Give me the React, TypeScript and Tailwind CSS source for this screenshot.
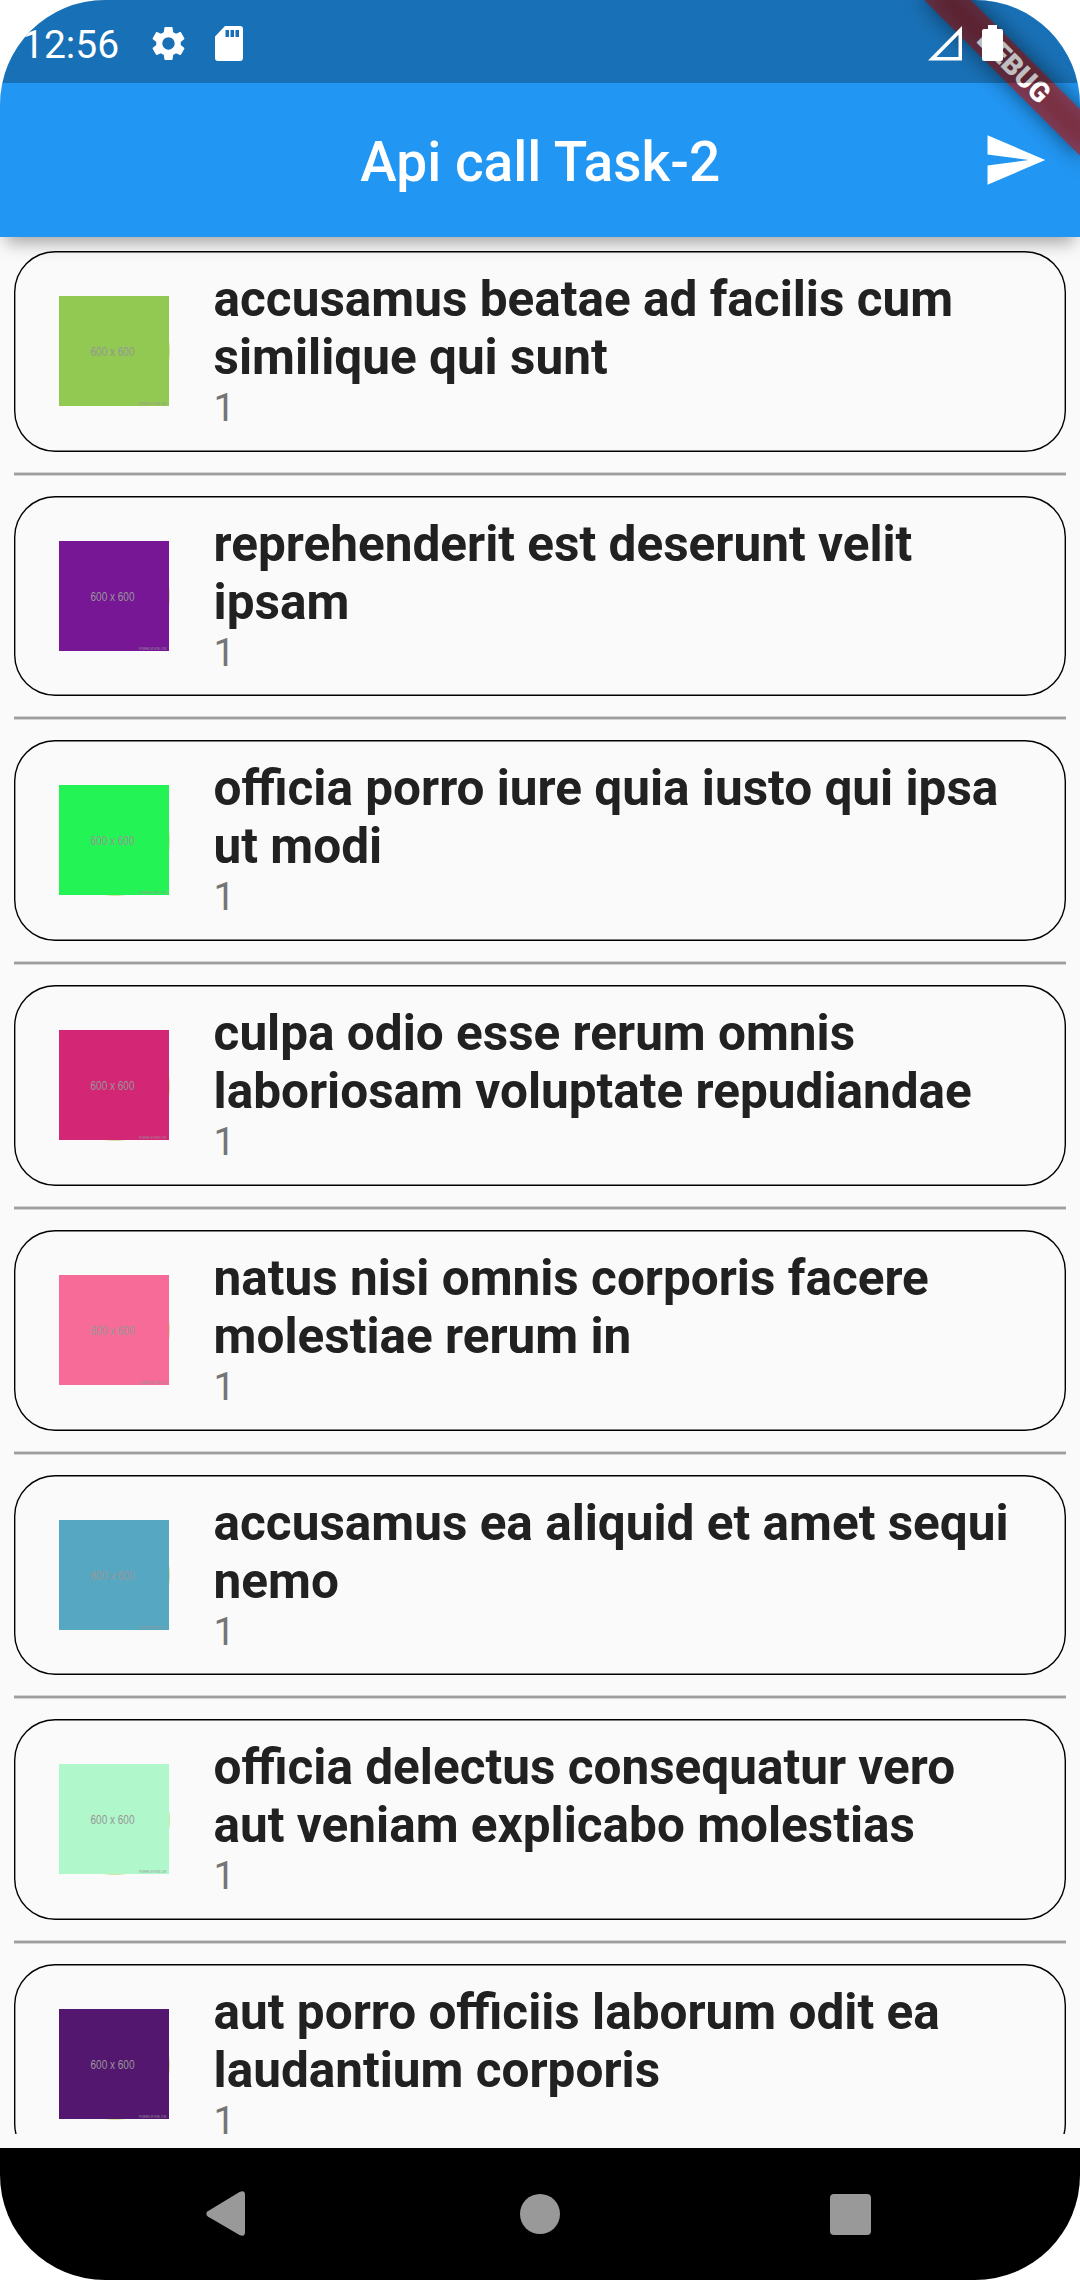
const albums = [
  { title: ["accusamus beatae ad facilis cum", "similique qui sunt"], color: "bg-[#92c952]", id: 1 },
  { title: ["reprehenderit est deserunt velit", "ipsam"], color: "bg-[#771796]", id: 1 },
  { title: ["officia porro iure quia iusto qui ipsa", "ut modi"], color: "bg-[#24f355]", id: 1 },
  { title: ["culpa odio esse rerum omnis", "laboriosam voluptate repudiandae"], color: "bg-[#d32776]", id: 1 },
  { title: ["natus nisi omnis corporis facere", "molestiae rerum in"], color: "bg-[#f66b97]", id: 1 },
  { title: ["accusamus ea aliquid et amet sequi", "nemo"], color: "bg-[#56a8c2]", id: 1 },
  { title: ["officia delectus consequatur vero", "aut veniam explicabo molestias"], color: "bg-[#b0f7cc]", id: 1 },
  { title: ["aut porro officiis laborum odit ea", "laudantium corporis"], color: "bg-[#54176f]", id: 1 },
];

function StatusBar() {
  return (
    <div className="absolute inset-x-0 top-0 z-20 flex h-[83px] items-center bg-black/25 text-white">
      <span className="ml-[22px] w-[97px] whitespace-nowrap pt-[6px] text-[39px] leading-[46px]">12:56</span>
      <svg className="ml-[29px] mt-[4px] size-[41px]" viewBox="0 0 24 24" fill="currentColor">
        <path d="M19.14 12.94c.04-.3.06-.61.06-.94 0-.32-.02-.64-.07-.94l2.03-1.58c.18-.14.23-.41.12-.61l-1.92-3.32c-.12-.22-.37-.29-.59-.22l-2.39.96c-.5-.38-1.03-.7-1.62-.94l-.36-2.54c-.04-.24-.24-.41-.48-.41h-3.84c-.24 0-.43.17-.47.41l-.36 2.54c-.59.24-1.13.57-1.62.94l-2.39-.96c-.22-.08-.47 0-.59.22L2.74 8.87c-.12.21-.08.47.12.61l2.03 1.58c-.05.3-.09.63-.09.94s.02.64.07.94l-2.03 1.58c-.18.14-.23.41-.12.61l1.92 3.32c.12.22.37.29.59.22l2.39-.96c.5.38 1.03.7 1.62.94l.36 2.54c.05.24.24.41.48.41h3.84c.24 0 .44-.17.47-.41l.36-2.54c.59-.24 1.13-.56 1.62-.94l2.39.96c.22.08.47 0 .59-.22l1.92-3.32c.12-.22.07-.47-.12-.61l-2.01-1.58zM12 15.6c-1.98 0-3.6-1.62-3.6-3.6s1.62-3.6 3.6-3.6 3.6 1.62 3.6 3.6-1.62 3.6-3.6 3.6z" />
      </svg>
      <svg className="ml-[26px] mt-[4px] h-[35px] w-[28px]" viewBox="0 0 28 35" fill="currentColor">
        <path fillRule="evenodd" d="M10 0H25a3 3 0 0 1 3 3V32a3 3 0 0 1-3 3H3a3 3 0 0 1-3-3V10.500ZM10.500 4v7h3.500V4ZM15.500 4v7h3.500V4ZM20.500 4v7h3.500V4Z" />
      </svg>
      <svg className="ml-auto mt-[3px] h-[35px] w-[35px]" viewBox="0 0 35 35" fill="currentColor">
        <path fillRule="evenodd" d="M0 34.500 34 0V34.500ZM8.500 31H30.500V8.700Z" />
      </svg>
      <svg className="ml-[19px] mr-[77px] mt-[3px] h-[36px] w-[21px]" viewBox="0 0 21 36" fill="currentColor">
        <path d="M6 0h9v4h4a2 2 0 0 1 2 2v28a2 2 0 0 1-2 2H2a2 2 0 0 1-2-2V6a2 2 0 0 1 2-2h4Z" />
      </svg>
    </div>
  );
}

function DebugBanner() {
  return (
    <div className="absolute left-[904px] top-[49.5px] z-10 h-[33px] w-[220px] rotate-45">
      <div className="absolute inset-0 bg-black/50 blur-[11px]" />
      <div className="relative flex h-full items-center justify-center bg-[#b71c1c]/63">
        <span className="text-[28px] font-black leading-none text-white">DEBUG</span>
      </div>
    </div>
  );
}

function AppBar() {
  return (
    <header className="relative z-[1] flex h-[237px] shrink-0 items-center bg-[#2196f3] pt-[83px] text-white shadow-[0_12px_16px_-6px_rgba(0,0,0,0.34)]">
      <div className="w-[99px]" />
      <h1 className="flex-1 pt-[3px] text-center text-[55px] font-medium leading-[64px]">Api call Task-2</h1>
      <svg className="mr-[32.500px] size-[66px]" viewBox="0 0 24 24" fill="currentColor">
        <path d="M2.01 21 23 12 2.01 3 2 10l15 2-15 2z" />
      </svg>
    </header>
  );
}

function Thumbnail({ color }: { color: string }) {
  return (
    <div className="relative mb-[0.4px] ml-[45px] size-[110px] shrink-0">
      <div className="absolute left-[0.5px] top-[0.5px] size-[110px] rounded-full bg-[#cfe39a]" />
      <div className={"relative size-[110px] " + color}>
        <svg className="size-[110px] overflow-visible" viewBox="0 0 110 110" fill="#969696" fontFamily="Liberation Sans, sans-serif">
          <text x="31.500" y="60" fontSize="13" textLength="44" lengthAdjust="spacingAndGlyphs">600 x 600</text>
          <text x="80" y="109" fontSize="3" textLength="27" lengthAdjust="spacingAndGlyphs">POWERED BY HTML.COM</text>
        </svg>
      </div>
    </div>
  );
}

function AlbumTile({ title, color, id }: { title: string[]; color: string; id: number }) {
  return (
    <li>
      <div className="flex h-[200.75px] items-center rounded-[41px] shadow-[inset_0_0_0_1.4px_#000]">
        <Thumbnail color={color} />
        <div className="ml-[44.6px] whitespace-nowrap pb-[2.5px]">
          <h2 className="-mb-px text-[49.5px] font-bold leading-[58px] text-[#212121]">
            {title[0]}
            <br />
            {title[1]}
          </h2>
          <p className="text-[38.5px] leading-[45px] text-[#757575]">{id}</p>
        </div>
      </div>
      <div className="flex h-[44px] items-center">
        <div className="h-[4px] w-full border-y border-[#d2d2d2] bg-[#9e9e9e]" />
      </div>
    </li>
  );
}

function NavBar() {
  return (
    <nav className="flex h-[132px] shrink-0 items-center bg-black text-[#999999]">
      <svg className="ml-[206px] h-[46px] w-[39px]" viewBox="0 0 39 46" fill="currentColor">
        <path d="M1.800 20.200 33.500 1.100Q39-1.500 39 4V41Q39 46.500 33.500 44L1.800 25.400Q-1.200 23 1.800 20.200Z" />
      </svg>
      <div className="ml-[275px] size-[40px] rounded-full bg-[#999999]" />
      <div className="ml-[270px] size-[41px] rounded-[4px] bg-[#999999]" />
    </nav>
  );
}

export default function App() {
  return (
    <div className="h-[2280px] w-[1080px] bg-white font-['Roboto',sans-serif]">
      <div className="relative flex h-full flex-col overflow-hidden rounded-[105px] bg-[#fafafa]">
        <StatusBar />
        <DebugBanner />
        <AppBar />
        <main className="h-[1911px] px-[14px] py-[13.75px]">
          <ul className="h-full overflow-hidden">
            {albums.map((album) => (
              <AlbumTile key={album.title[0]} {...album} />
            ))}
          </ul>
        </main>
        <NavBar />
      </div>
    </div>
  );
}
